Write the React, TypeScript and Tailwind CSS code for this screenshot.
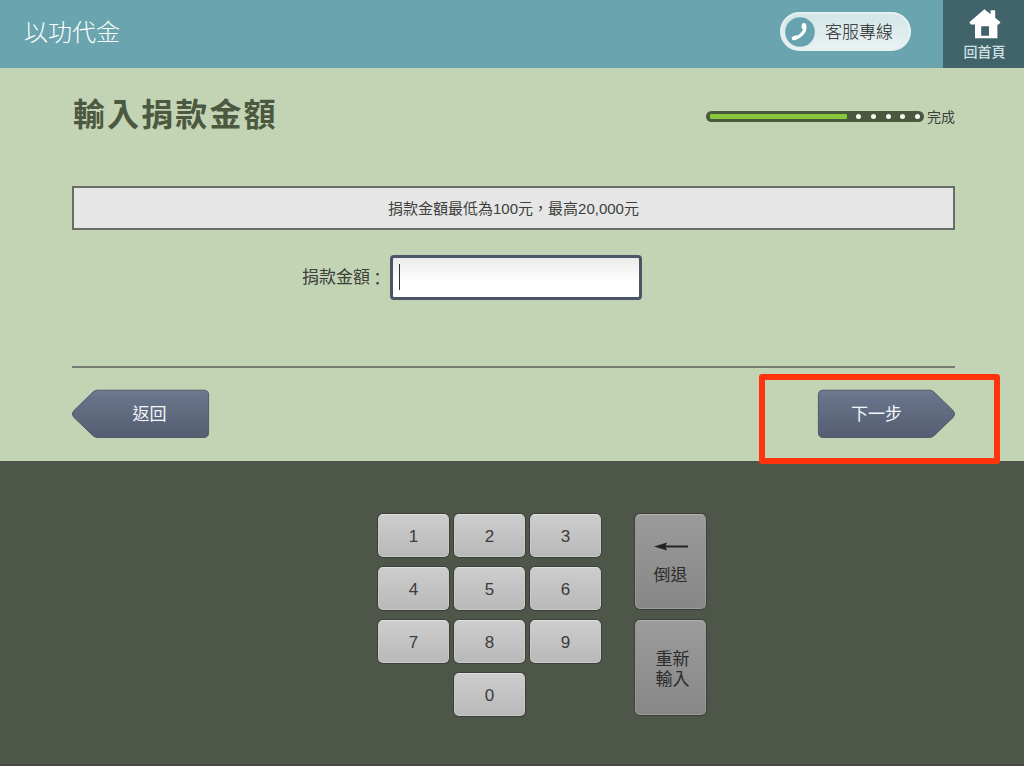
import type { ReactNode } from 'react';

const digits = ['1', '2', '3', '4', '5', '6', '7', '8', '9', '0'];

function PhoneIcon() {
  return (
    <svg width="30" height="30" viewBox="0 0 30 30" className="block shrink-0">
      <circle cx="15" cy="15" r="14.8" fill="#66a3ae" />
      <g fill="none" stroke="#fff" strokeLinecap="round">
        <path d="M19.8 9.2C20.6 14.4 15.6 20.2 9.6 21.2" strokeWidth="3.2" />
        <path d="M19 8.4L18.8 10.2" strokeWidth="4.6" />
        <path d="M8.8 21.2L10.9 20.6" strokeWidth="4.2" />
      </g>
    </svg>
  );
}

function HomeIcon() {
  return (
    <svg width="32" height="30" viewBox="0 0 32 30" className="block">
      <path
        fillRule="evenodd"
        d="M15.4 0.3L21.6 5.3V1.2H26.2V8.8L31.5 13.3L29.8 15.6H28.4V29.2H6V15.6H1.9L0.3 13.3ZM12.2 17.2V26.8H20V17.2Z"
        fill="#fff"
      />
    </svg>
  );
}

function ArrowButton({ back, children }: { back?: boolean; children: ReactNode }) {
  const id = back ? 'back-fill' : 'next-fill';
  return (
    <button className="relative flex h-[50px] w-[139px] items-center justify-center text-[17px] text-[#f4f6fa]">
      <svg
        width="139"
        height="50"
        viewBox="0 0 139 50"
        className={back ? 'absolute inset-0' : 'absolute inset-0 -scale-x-100'}
      >
        <defs>
          <linearGradient id={id} x1="0" y1="0" x2="0" y2="1">
            <stop offset="0" stopColor="#6d7b90" />
            <stop offset="0.15" stopColor="#677389" />
            <stop offset="1" stopColor="#555e71" />
          </linearGradient>
        </defs>
        <path
          d="M25.5 1.2H131.8Q136.6 1.2 136.6 6V43.5Q136.6 48.5 131.8 48.5H25.5Q23 48.5 21 46.7L1.7 28.2Q-1 25 1.7 21.8L21 3Q23 1.2 25.5 1.2Z"
          fill={`url(#${id})`}
          stroke="#505c69"
          strokeWidth="1"
        />
      </svg>
      <span className={back ? 'relative top-[1px] left-[8px]' : 'relative top-[1px] -left-[9px]'}>{children}</span>
    </button>
  );
}

export default function App() {
  return (
    <div className="flex h-[766px] w-[1024px] flex-col overflow-hidden bg-[#4e5649] font-['Liberation_Sans','Noto_Sans_CJK_TC',sans-serif] text-[#3c3f3a]">
      <header className="flex h-[68px] shrink-0 items-stretch bg-[#69a4af]">
        <h1 className="flex flex-1 items-center pl-[24px] pb-[6px] font-['Noto_Sans_CJK_TC',sans-serif] text-[24px] font-light text-white">
          以功代金
        </h1>
        <button className="mt-[12px] mr-[32px] flex h-[39px] w-[131px] items-center rounded-full border-2 border-[#e6f1f2] bg-linear-to-b from-[#d3e6e8] to-[#e8f2f3] pl-[3px] text-[17px] font-light text-[#222]">
          <PhoneIcon />
          <span className="mt-[2px] ml-[10px] whitespace-nowrap">客服專線</span>
        </button>
        <button className="flex w-[81px] flex-col items-center bg-[#41636a] pt-[9px] pl-[2px] text-[14px] leading-[20px] font-medium text-[#cfe0e2]">
          <HomeIcon />
          <span className="mt-[3px]">回首頁</span>
        </button>
      </header>

      <main className="flex h-[393px] shrink-0 flex-col bg-[#c3d4b5] pr-[69px] pl-[72px]">
        <div className="flex h-[118px] items-start justify-between">
          <h2 className="mt-[22px] pl-[1px] text-[32px] leading-[50px] font-bold tracking-[2.1px] text-[#4c583f]">輸入捐款金額</h2>
          <div className="mt-[38px] flex items-center text-[14px] leading-[22px]">
            <div className="-mt-px flex h-[11px] w-[218px] items-center rounded-full bg-[#4a583f] pr-[4px] pl-[4px]">
              <div className="h-[5px] w-[137px] rounded-[1px] bg-[#87c83d]" />
              <div className="ml-[9px] flex flex-1 justify-between">
                {[0, 1, 2, 3, 4].map((i) => (
                  <span key={i} className="size-[5px] rounded-full bg-[#f8fbf4]" />
                ))}
              </div>
            </div>
            <span className="ml-[3px]">完成</span>
          </div>
        </div>

        <p className="flex h-[44px] items-center justify-center border-2 border-[#696d68] bg-[#e6e6e6] pt-[2px] text-[15px]">
          捐款金額最低為100元，最高20,000元
        </p>

        <label className="mt-[25px] flex h-[44px] items-center pl-[230px] text-[17px]">
          <span className="w-[88px] pt-[2px]">
            捐款金額<span className="relative top-[2px] -left-[1px]">：</span>
          </span>
          <span className="flex h-[45px] w-[252px] items-center rounded-[4px] border-[3px] border-[#4b5566] bg-linear-to-b from-[#ebecea] to-white to-60% pl-[6px]">
            <span className="h-[26px] w-px bg-[#333]" />
          </span>
        </label>

        <div className="mt-[67px] flex h-[95px] justify-between border-t-2 border-[#777b72] pt-[21px]">
          <ArrowButton back>返回</ArrowButton>
          <ArrowButton>下一步</ArrowButton>
        </div>
      </main>

      <section className="flex flex-1 items-start border-b-2 border-[#454b44] pt-[53px] pl-[378px]">
        <div className="grid grid-cols-3 gap-x-[5px] gap-y-[10px]">
          {digits.map((digit) => (
            <button
              key={digit}
              className={`h-[43px] w-[71px] rounded-[5px] border border-[#c9c9c9] border-t-[#e0e0e0] bg-linear-to-b from-[#cdcdcd] to-[#b9b9b9] pt-[3px] text-[17px] text-[#3b3b3b] shadow-[0_0_0_1px_#3b4038] ${digit === '0' ? 'col-start-2' : ''}`}
            >
              {digit}
            </button>
          ))}
        </div>
        <div className="ml-[34px] flex flex-col gap-[11px] text-[17px] text-[#2b2b2b]">
          <button className="flex h-[95px] w-[71px] flex-col items-center rounded-[5px] border border-[#9b9b9b] border-t-[#b1b1b1] bg-linear-to-b from-[#9b9b9b] to-[#878787] pt-[26px] shadow-[0_0_0_1px_#3b4038]">
            <svg width="34" height="10" viewBox="0 0 34 10">
              <path d="M0 5.5L13 1.5L11.8 4.6H34V6.4H11.8L13 9.5Z" fill="#222" />
            </svg>
            <span className="mt-[12px]">倒退</span>
          </button>
          <button className="flex h-[95px] w-[71px] flex-col items-center justify-center rounded-[5px] border border-[#9b9b9b] border-t-[#b1b1b1] bg-linear-to-b from-[#9b9b9b] to-[#878787] pt-[5px] pl-[4px] leading-[20px] shadow-[0_0_0_1px_#3b4038]">
            <span>重新</span>
            <span>輸入</span>
          </button>
        </div>
      </section>

      <div className="pointer-events-none absolute top-[374px] left-[759px] h-[90px] w-[241px] rounded-[3px] border-[6px] border-[#ff340c]" />
    </div>
  );
}
